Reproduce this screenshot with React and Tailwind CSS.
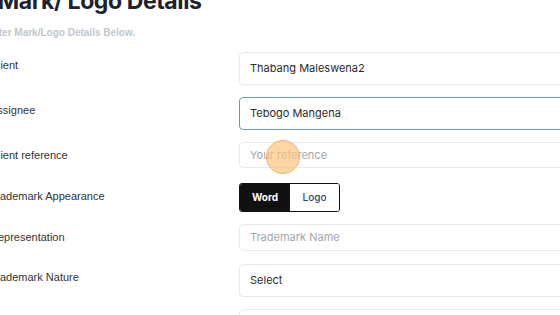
import React from 'react';

const rows = [
    { label: 'Client', kind: 'input', value: 'Thabang Maleswena2', h: 'h-[33px]', mt: 'mt-[13px]' },
    { label: 'Assignee', kind: 'input', value: 'Tebogo Mangena', h: 'h-[33px]', mt: 'mt-[12px]', focus: true },
    { label: 'Client reference', kind: 'input', placeholder: 'Your reference', h: 'h-[26px]', mt: 'mt-[12px]' },
    { label: 'Trademark Appearance', kind: 'toggle', mt: 'mt-[15px]' },
    { label: 'Representation', kind: 'input', placeholder: 'Trademark Name', h: 'h-[27px]', mt: 'mt-[12px]' },
    { label: 'Trademark Nature', kind: 'input', value: 'Select', h: 'h-[33px]', mt: 'mt-[13px]' },
    { label: '', kind: 'input', value: '', h: 'h-[33px]', mt: 'mt-[12px]' },
];

const Field = ({ row }) => {
    if (row.kind === 'toggle') {
        return (
            <div className="flex h-[29px] w-[101px] rounded-[3px] border border-[#111] overflow-hidden text-[10px] font-['Inter',sans-serif]">
                <div className="w-[50px] bg-[#111] text-white font-bold flex items-center justify-center">Word</div>
                <div className="flex-1 bg-white text-[#2a4a6e] font-medium flex items-center justify-center">Logo</div>
            </div>
        );
    }
    return (
        <div
            className={`${row.h} w-[360px] shrink-0 rounded-[4px] border bg-white flex items-center px-[10px] text-[11px] font-['Inter',sans-serif] ${
                row.focus ? 'border-[#6b9c9a]' : 'border-[#e8e9ec]'
            }`}
        >
            {row.value ? (
                <span className="text-[#2b2b2b]">{row.value}</span>
            ) : (
                <span className="text-[#a3a6ab]">{row.placeholder}</span>
            )}
        </div>
    );
};

export default function App() {
    return (
        <div className="relative w-[560px] h-[315px] overflow-hidden bg-white">
            <div className="-ml-[14px] -mt-[14px]">
                <h1 className="text-[23px] leading-[30px] font-bold text-[#1c2230] font-['Inter',sans-serif] tracking-[-0.4px] -ml-[56px] whitespace-nowrap">
                    Trade Mark/ Logo Details
                </h1>
                <p className="mt-[11px] text-[10px] leading-[12px] font-bold text-[#c3c6cd] font-['Liberation_Sans',sans-serif] whitespace-nowrap">
                    Enter Mark/Logo Details Below.
                </p>
            </div>

            <div className="-ml-[10px]">
                {rows.map((row, i) => (
                    <div key={i} className={`flex ${row.mt}`}>
                        <div className="w-[249px] shrink-0 pt-[5px] text-[11px] leading-4 text-[#333] font-['Liberation_Sans',sans-serif] whitespace-nowrap">
                            {row.label}
                        </div>
                        <Field row={row} />
                    </div>
                ))}
            </div>

            {/* click marker */}
            <div className="absolute left-[266px] top-[140px] w-[34px] h-[34px] rounded-full bg-[#fbc47f]/70 border border-[#f3b26a]" />
        </div>
    );
}
